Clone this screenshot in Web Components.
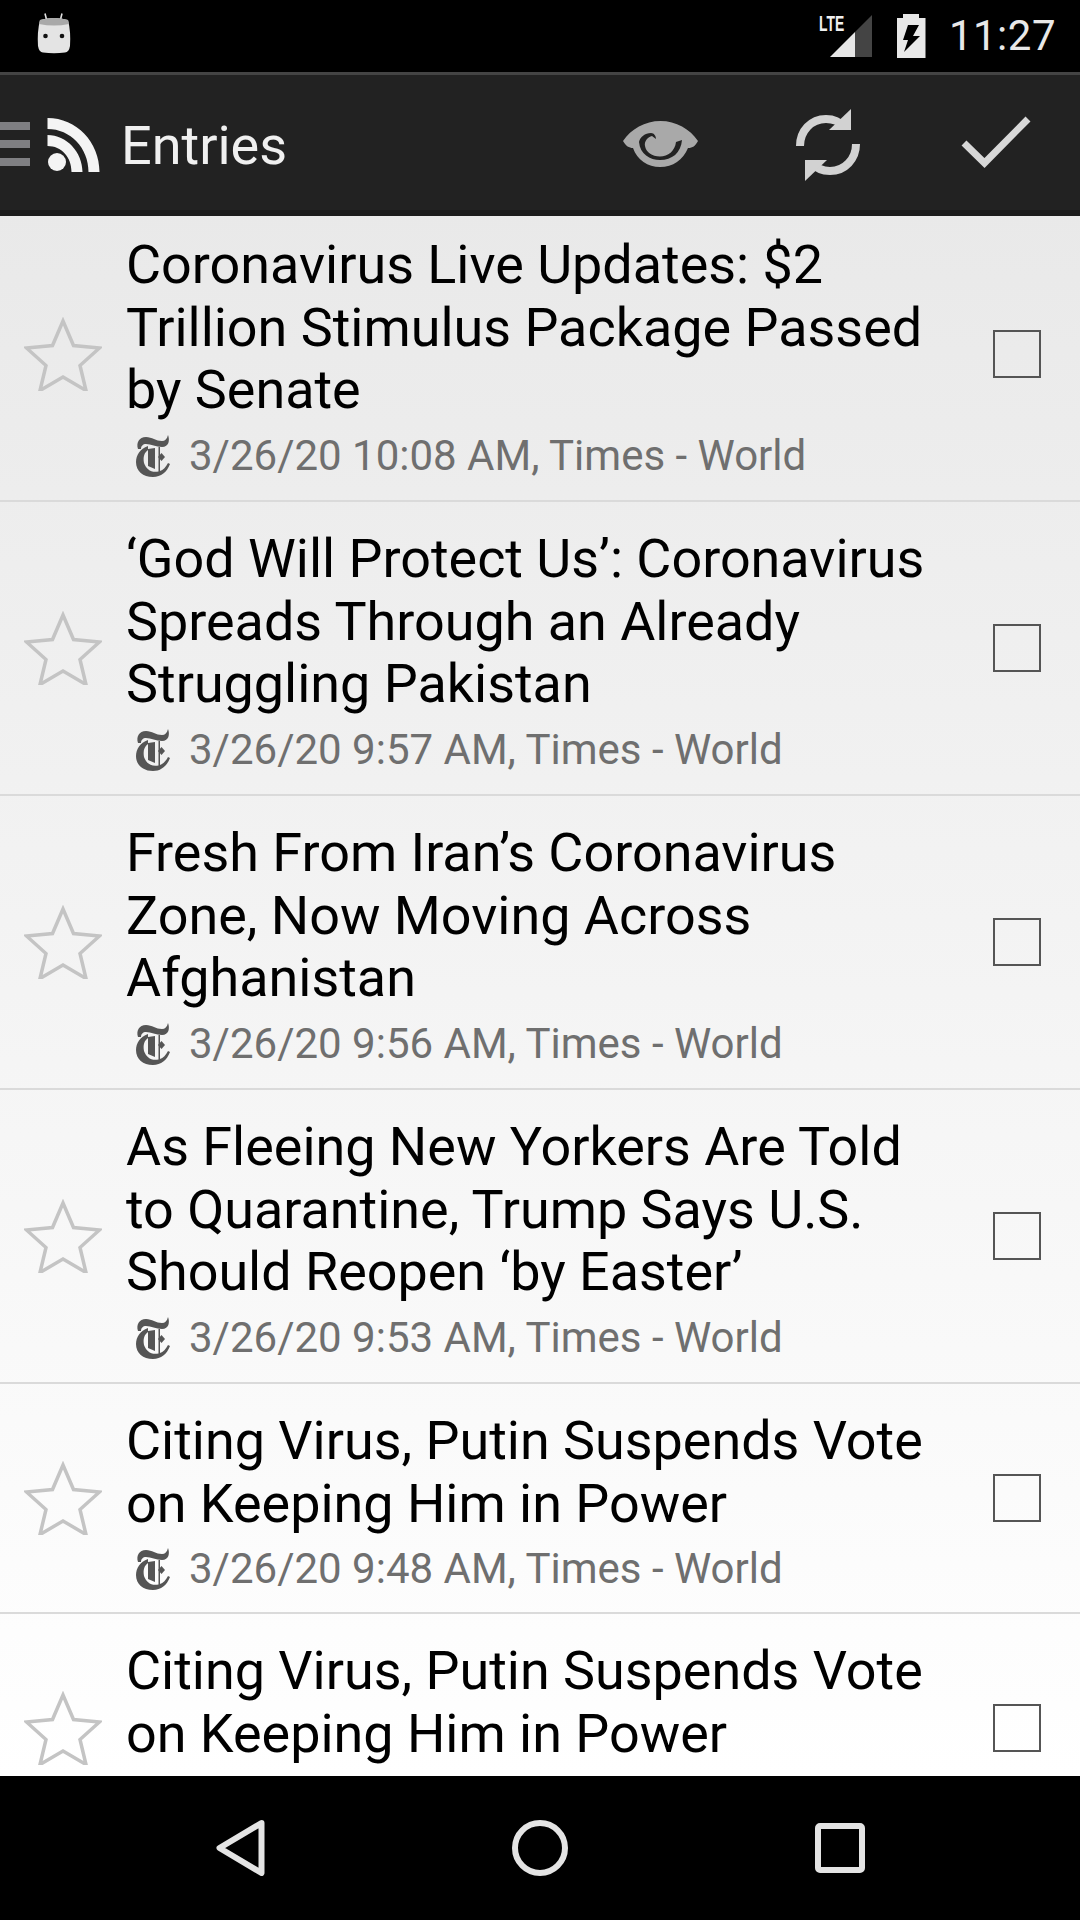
<!DOCTYPE html>
<html lang="en"><head><meta charset="utf-8"><title>Entries</title>
<style>
html,body{margin:0;padding:0;background:#000}
body{width:1080px;height:1920px;overflow:hidden;font-family:Roboto,"Liberation Sans",sans-serif}
</style></head>
<body>
<app-shell>
<status-bar></status-bar>
<tool-bar></tool-bar>
<entry-list>
<feed-entry meta="3/26/20 10:08 AM, Times - World">Coronavirus Live Updates: $2 Trillion Stimulus Package Passed by Senate</feed-entry>
<feed-entry meta="3/26/20 9:57 AM, Times - World">‘God Will Protect Us’: Coronavirus Spreads Through an Already Struggling Pakistan</feed-entry>
<feed-entry meta="3/26/20 9:56 AM, Times - World">Fresh From Iran’s Coronavirus Zone, Now Moving Across Afghanistan</feed-entry>
<feed-entry meta="3/26/20 9:53 AM, Times - World">As Fleeing New Yorkers Are Told to Quarantine, Trump Says U.S. Should Reopen ‘by Easter’</feed-entry>
<feed-entry class="short" meta="3/26/20 9:48 AM, Times - World">Citing Virus, Putin Suspends Vote on Keeping Him in Power</feed-entry>
<feed-entry class="short">Citing Virus, Putin Suspends Vote on Keeping Him in Power</feed-entry>
</entry-list>
<nav-bar></nav-bar>
</app-shell>
<script>
function def(name, html){
  customElements.define(name, class extends HTMLElement{
    constructor(){super();this.attachShadow({mode:'open'}).innerHTML=html;}
  });
}
def('app-shell',`<style>:host{display:flex;flex-direction:column;width:1080px;height:1920px;overflow:hidden}</style><slot></slot>`);

def('status-bar',`<style>
:host{display:flex;align-items:center;height:72px;background:#000;color:#e8e8e8;padding:0 24px 0 37px;box-sizing:border-box;flex:none}
svg{display:block}
.android{margin-top:-6px}
.sp{flex:1}
.net{position:relative;width:53px;height:42px}
.lte{position:absolute;left:0;top:-1px;font:700 22px/20px "Liberation Sans",sans-serif;transform:scaleX(.63);transform-origin:left top;color:#f0f0f0}
.bat{margin-left:25px}
.time{margin-left:23px;font:400 42px/72px Roboto,sans-serif;letter-spacing:.5px}
</style>
<svg class="android" width="34" height="41" viewBox="0 0 34 41"><path d="M8 0.5l2 8M25 0.500l-2 8" stroke="#e0e0e0" stroke-width="1.600" fill="none"/><path d="M3 7q14-4 28 0q3 12 2 26q-1 6-5 6.500q-11 1.500-22 0q-4-.5-5-6.500q-1-14 2-26z" fill="#e4e4e4"/><path d="M3 7q14-4 28 0l1 4q-15 3-30 0z" fill="#a9a9a9"/><circle cx="8.500" cy="23" r="2.300" fill="#111"/><circle cx="25" cy="23" r="2.300" fill="#111"/></svg>
<span class="sp"></span>
<div class="net"><svg width="53" height="42" viewBox="0 0 53 42" style="position:absolute;left:0;top:0"><path d="M36 17L53 0V42H36z" fill="#444"/><path d="M11 42L36 17V42z" fill="#e6e6e6"/></svg><span class="lte">LTE</span></div>
<svg class="bat" width="29" height="44" viewBox="0 0 29 44"><path fill-rule="evenodd" d="M6 0h16v4h6.500v40H0V4h6zM11 11h11l-6 11h7L7 38l4-12H6z" fill="#e8e8e8"/></svg>
<span class="time">11:27</span>`);

def('tool-bar',`<style>
:host{display:flex;align-items:center;flex:none;position:relative;z-index:2;height:144px;margin-bottom:-8px;box-sizing:border-box;background:#222;border-top:3px solid #444;border-bottom:6px solid #1b1b1b;color:#f2f2f2;padding:4px 49px 0 0}
svg{display:block;flex:none}
.title{font:400 54px/60px Roboto,sans-serif;margin-left:21px;margin-top:2px;color:#f0f0f0}
.sp{flex:1}
</style>
<svg width="30" height="44" viewBox="0 0 30 44" style="margin-top:-2px"><path d="M0 0h30v8H0zM0 18h30v8H0zM0 36h30v8H0z" fill="#7f7f82"/></svg>
<svg width="53" height="54" viewBox="0 0 52 54" style="margin-left:17px"><circle cx="9.500" cy="44" r="9" fill="#f4f4f4"/><path d="M0 17c19 0 35 17 35 37H24C24 39 14 28 0 28z" fill="#f4f4f4"/><path d="M0 0c29 0 52 24 52 54H41C41 30 23 11 0 11z" fill="#f4f4f4"/></svg>
<span class="title">Entries</span><span class="sp"></span>
<svg width="75" height="47" viewBox="0 0 75 47"><path d="M0 20C8 8 22 0 37.500 0S67 8 75 20C72 25 70 27 65 27 60 39 50 46 37 46 25 46 14 39 10 27 6 27 3 25 0 20z" fill="#a9a9a9"/><path d="M16 21C17 33 27 39 37 39 49 39 58 32 59 19L53 21C52 30 45 35.500 37 35.500 29 35.500 23 31 22 25 21 20 25 16 29 15L33 18C33 15 31 12 28 12 22 12 17 16 16 21z" fill="#222"/></svg>
<svg width="66" height="72" viewBox="0 0 64 72" style="margin-left:97px"><path d="M4 37C4 22 15 10 30 10c8 0 14 3 18 8" fill="none" stroke="#d2d2d2" stroke-width="8"/><path d="M55 0v21H33z" fill="#d2d2d2"/><path d="M60 35c0 15-11 27-26 27-8 0-14-3-18-8" fill="none" stroke="#d2d2d2" stroke-width="8"/><path d="M9 72V51h22z" fill="#d2d2d2"/></svg>
<svg width="70" height="53" viewBox="0 0 69 53" style="margin-left:100px;margin-top:-4px"><path d="M2.500 27L23 47 66.500 3" fill="none" stroke="#d8d8d8" stroke-width="7"/></svg>`);

def('entry-list',`<style>
:host{display:block;flex:1;min-height:0;overflow:hidden;background:linear-gradient(#e9e9e9,#fff)}
</style><slot></slot>`);

customElements.define('feed-entry',class extends HTMLElement{
  constructor(){super();this.attachShadow({mode:'open'});}
  connectedCallback(){
    const meta=this.getAttribute('meta');
    const line=meta?`<svg width="34" height="42" viewBox="0 0 34 42" fill="#555"><path d="M2 14C0 8 3 2 10 2 16 2 20 6 26 6 29 6 31 4 32 0 34 5 33 12 26 12 20 12 15 9 10 9 7 9 5 11 5 14z"/><path d="M12 11C4 14 0 20 0 27 0 36 7 42 17 42 25 42 31 37 34 29L32 28C30 32 27 35 24 36V12H22.500V36.500C15 38 10 34 8 28 7 22 8 18 12 15z"/><path d="M12 14L19 13V34L12 31z"/><path d="M25.500 18L29 22 25.500 26 22 22z"/></svg><span>${meta}</span>`:'';
    this.shadowRoot.innerHTML=`<style>
:host{display:grid;grid-template-columns:126px 1fr 126px;align-items:center;box-sizing:border-box;border-bottom:2px solid #dadada}
.star{display:block;margin-left:24px}
.body{padding:26px 0 19px;min-width:0}
:host(.short) .body{padding-bottom:18px}
.t{font:400 53.9px/62.5px Roboto,sans-serif;color:#000}
.m{display:flex;align-items:center;height:50px;margin-top:9.5px;padding-left:10px;font:400 42px/50px Roboto,sans-serif;color:#6f6f6f;white-space:nowrap}
:host(.short) .m{margin-top:9px}
.m svg{flex:none;margin-right:19px}
.cb{justify-self:end;width:48px;height:48px;box-sizing:border-box;border:2px solid #555;margin-right:39px}
</style>
<svg class="star" width="78" height="74" viewBox="0 0 78 74"><path d="M39 4l10.500 24.500 26 2.500-19.500 17.500 6 25-23-13.500-23 13.500 6-25L2.500 31l26-2.500z" fill="none" stroke="#c4c4c4" stroke-width="3.500" stroke-linejoin="miter"/></svg>
<div class="body"><div class="t"><slot></slot></div>
<div class="m">${line}</div></div>
<div class="cb"></div>`;
  }
});

def('nav-bar',`<style>
:host{display:flex;align-items:center;flex:none;height:144px;background:#000;padding-left:216px;box-sizing:border-box}
svg{display:block;flex:none}
</style>
<svg width="49" height="56" viewBox="0 0 49 56"><path d="M45.500 3L3.500 28l42 25z" fill="none" stroke="#e4e4e4" stroke-width="6" stroke-linejoin="round" /></svg>
<svg width="56" height="56" viewBox="0 0 56 56" style="margin-left:247px"><circle cx="28" cy="28" r="25" fill="none" stroke="#e4e4e4" stroke-width="6"/></svg>
<svg width="50" height="50" viewBox="0 0 50 50" style="margin-left:247px"><rect x="3" y="3" width="44" height="44" rx="2" fill="none" stroke="#e4e4e4" stroke-width="6"/></svg>`);
</script>
</body></html>
